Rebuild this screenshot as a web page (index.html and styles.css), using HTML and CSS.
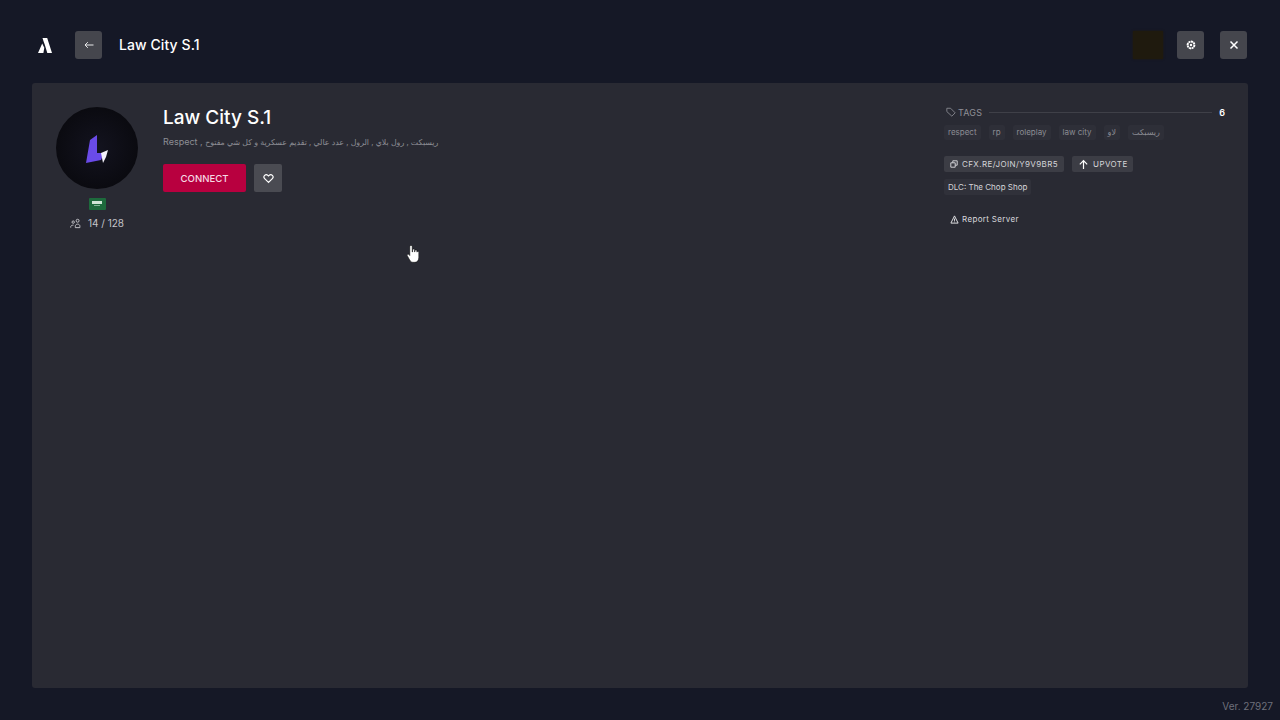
FILE: index.html
```html
<!DOCTYPE html>
<html lang="en">
<head>
<meta charset="UTF-8">
<meta name="viewport" content="width=device-width, initial-scale=1.0">
<title>Law City S.1</title>
<link rel="stylesheet" href="styles.css">
</head>
<body>
<div id="topbar">
    <svg class="logo" viewBox="0 0 14 15" width="14" height="15"><path d="M4.500 0H9.200L14 15H9.300L6.800 6.800 5.700 3.800Z M4.200 5.600L6.300 9.800 5.400 15H0Z" fill="#fff"/></svg>
    <button class="square back">
        <svg viewBox="0 0 12 12" width="12" height="12"><path d="M10.500 6H2M4.800 3.200L2 6l2.800 2.800" fill="none" stroke="#e8e8ea" stroke-width="1"/></svg>
    </button>
    <div class="top-title">Law City S.1</div>
    <div class="top-thumb"></div>
    <button class="square">
        <svg viewBox="0 0 12 12" width="12" height="12"><circle cx="6" cy="6" r="3.400" fill="none" stroke="#fff" stroke-width="2" stroke-dasharray="2.100 .5"/><circle cx="6" cy="6" r="1.200" fill="#fff"/></svg>
    </button>
    <button class="square">
        <svg viewBox="0 0 12 12" width="12" height="12"><path d="M2.500 2.500l7 7M9.500 2.500l-7 7" fill="none" stroke="#fff" stroke-width="1.500"/></svg>
    </button>
</div>

<div id="panel">
    <div class="left-col">
        <div class="avatar">
            <svg viewBox="0 0 82 82" width="82" height="82">
                <path d="M41 28L34 33 30 56 45 53 48 46 41 46Z" fill="#6a4be8"/>
                <path d="M52 43L45 46 47 56 50 50Z" fill="#f4f2fb"/>
            </svg>
        </div>
        <div class="flag"><span class="flag-a"></span><span class="flag-b"></span></div>
        <div class="players">
            <svg viewBox="0 0 12 12" width="11" height="11"><circle cx="3.500" cy="4.500" r="1.300" fill="none" stroke="#c9c9cf"/><circle cx="8.300" cy="3" r="1.600" fill="none" stroke="#c9c9cf"/><path d="M.8 10.500V9.500c0-1 1.200-1.700 3-1.700M5.800 10.500h5V9c0-1.300-1-2.300-2.500-2.300S5.800 7.700 5.800 9Z" fill="none" stroke="#c9c9cf"/></svg>
            <span>14 / 128</span>
        </div>
    </div>

    <div class="main-col">
        <h1>Law City S.1</h1>
        <p class="desc">Respect , <span class="ar">ريسبكت , رول بلاي , الرول , عدد عالي , تقديم عسكرية و كل شي مفتوح</span></p>
        <div class="actions">
            <button class="connect">CONNECT</button>
            <button class="fav">
                <svg viewBox="0 0 12 12" width="11" height="11"><path d="M6 10.300L1.800 6.100a2.500 2.500 0 0 1 0-3.500 2.500 2.500 0 0 1 3.500 0L6 3.300l.7-.7a2.500 2.500 0 0 1 3.500 0 2.500 2.500 0 0 1 0 3.500Z" fill="none" stroke="#fff" stroke-width="1.300"/></svg>
            </button>
        </div>
    </div>

    <div class="side-col">
        <div class="tags-head">
            <svg viewBox="0 0 12 12" width="10" height="10"><path d="M1 1.500h4.500L11 7l-4 4-6-5.500Z" fill="none" stroke="#8f9097" stroke-width="1"/></svg>
            <span class="tags-label">TAGS</span>
            <span class="tags-line"></span>
            <span class="tags-count">6</span>
        </div>
        <div class="tags">
            <span class="tag">respect</span>
            <span class="tag">rp</span>
            <span class="tag">roleplay</span>
            <span class="tag">law city</span>
            <span class="tag">لاو</span>
            <span class="tag">ريسبكت</span>
        </div>
        <div class="links">
            <span class="pill">
                <svg viewBox="0 0 10 10" width="8" height="8"><path d="M1 3.500h5.500V9H1ZM3.500 3.500V1H9v5.500H6.500" fill="none" stroke="#d5d5d9" stroke-width="1.200"/></svg>
                CFX.RE/JOIN/Y9V9BR5
            </span>
            <span class="pill upvote">
                <svg viewBox="0 0 12 12" width="11" height="11"><path d="M6 11V1.800M2 5.800l4-4 4 4" fill="none" stroke="#fff" stroke-width="1.300"/></svg>
                UPVOTE
            </span>
        </div>
        <div class="dlc">DLC: The Chop Shop</div>
        <div class="report">
            <svg viewBox="0 0 10 10" width="9" height="9"><path d="M5 1l4 8H1ZM5 4v2.500M5 7.300v.7" fill="none" stroke="#e0e0e3" stroke-width="1.100"/></svg>
            Report Server
        </div>
    </div>
</div>

<div id="footer">Ver. 27927</div>

<svg class="cursor" viewBox="0 0 12 18" width="12" height="18"><path d="M2.800 1.500c0-1.500 2.400-1.500 2.400 0V7l.4-.1V5c0-1.300 2-1.300 2 0v1.900l.3 0V5.800c0-1.200 2-1.200 2 0v1.300l.2 0c0-1.200 1.700-1.200 1.700 0v5.200c0 2.800-1.300 5-3.800 5H6c-1.500 0-2.500-.9-3.300-2.300L.3 10.700c-.6-1.200.9-2.100 1.700-1.100l.8 1Z" fill="#fff" stroke="#000" stroke-width=".5"/></svg>
</body>
</html>
```

FILE: styles.css
```css
body {
    display: flex;
    flex-direction: column;
    width: 1280px;
    height: 720px;
    margin: 0;
    overflow: hidden;
    position: relative;
    background-color: #151826;
    color: #fff;
    font-family: Inter, "DejaVu Sans", sans-serif;
}
button {
    border: none;
    padding: 0;
    font-family: inherit;
    cursor: pointer;
}
#topbar {
    display: flex;
    align-items: center;
    flex: none;
    height: 83px;
    padding: 7px 33px 0 38px;
    box-sizing: border-box;
}
.logo {
    margin-right: 23px;
}
.square {
    display: flex;
    align-items: center;
    justify-content: center;
    width: 27px;
    height: 28px;
    margin-left: 16px;
    border-radius: 3px;
    background-color: #45464d;
}
.back {
    margin-left: 0;
}
.top-title {
    flex: 1;
    margin-left: 17px;
    padding-bottom: 1px;
    font-size: 14px;
    font-weight: 500;
    letter-spacing: .08px;
}
.top-thumb {
    width: 30px;
    height: 28px;
    background-color: #1f1a0e;
    box-shadow: 0 0 2px #1f1a0e;
}
.top-thumb + .square {
    margin-left: 14px;
}
#panel {
    display: flex;
    flex: 1;
    margin: 0 32px;
    padding: 24px;
    border-radius: 3px;
    background-color: #292a33;
}
.left-col {
    display: flex;
    flex-direction: column;
    align-items: center;
    width: 82px;
    margin-right: 25px;
}
.avatar {
    width: 82px;
    height: 82px;
    border-radius: 50%;
    background: radial-gradient(circle at 50% 50%, #13131f, #08080c 90%);
}
.avatar svg {
    display: block;
}
.flag {
    display: flex;
    flex-direction: column;
    align-items: center;
    width: 17px;
    height: 12px;
    margin-top: 9px;
    background-color: #1d6a3c;
    border-radius: 1px;
}
.flag-a {
    width: 10px;
    height: 3px;
    margin-top: 3px;
    background-color: #cfe6d6;
}
.flag-b {
    width: 6px;
    height: 1px;
    margin-top: 1px;
    background-color: #7fb494;
}
.players {
    display: flex;
    align-items: center;
    gap: 7px;
    margin-top: 6px;
    font-size: 10px;
    line-height: 14px;
    color: #c3c3c9;
    white-space: nowrap;
}
.main-col {
    flex: 1;
}
h1 {
    margin: 0;
    font-size: 19px;
    font-weight: 500;
    line-height: 22px;
}
.desc {
    margin: 6px 0 0;
    font-size: 9px;
    line-height: 14px;
    color: #8d8e95;
}
.ar {
    font-size: 7.850px;
}
.actions {
    display: flex;
    gap: 8px;
    margin-top: 15px;
}
.connect {
    width: 83px;
    height: 28px;
    border-radius: 2px;
    background-color: #b8003f;
    color: #f6d9e3;
    font-size: 9.600px;
    font-weight: 500;
}
.fav {
    display: flex;
    align-items: center;
    justify-content: center;
    width: 28px;
    height: 28px;
    border-radius: 2px;
    background-color: #4a4b52;
}
.side-col {
    width: 280px;
    font-size: 8px;
}
.tags-head {
    display: flex;
    align-items: center;
    height: 10px;
    padding-left: 2px;
    color: #8f9097;
    font-size: 9px;
}
.tags-label {
    margin-left: 2px;
    letter-spacing: .2px;
}
.tags-line {
    flex: 1;
    height: 1px;
    margin: 0 7px;
    background-color: #3f4048;
}
.tags-count {
    margin-right: -1px;
    color: #fff;
    font-weight: 600;
}
.tags {
    display: flex;
    gap: 8px;
    margin-top: 8px;
}
.tag {
    padding: 0 4px;
    height: 15px;
    line-height: 15px;
    color: #8c8d94;
    background-color: #2e2f38;
    border-radius: 2px;
}
.links {
    display: flex;
    gap: 8px;
    margin-top: 16px;
}
.pill {
    display: flex;
    align-items: center;
    gap: 4px;
    height: 16px;
    padding: 0 6px;
    color: #d5d5d9;
    background-color: #3c3d45;
    border-radius: 2px;
    letter-spacing: .4px;
    white-space: nowrap;
}
.upvote {
    padding-right: 5px;
}
.dlc {
    display: table;
    margin-top: 7px;
    padding: 0 4px;
    line-height: 16px;
    color: #d5d5d9;
    background-color: #30313a;
    border-radius: 2px;
}
.report {
    display: flex;
    align-items: center;
    gap: 3px;
    margin: 16px 0 0 6px;
    line-height: 16px;
    letter-spacing: .35px;
    color: #d8d8dc;
}
#footer {
    flex: none;
    height: 32px;
    padding: 0 7px;
    line-height: 37px;
    text-align: right;
    font-size: 10px;
    color: #6e707b;
}
.cursor {
    position: absolute;
    left: 407px;
    top: 245px;
}
```
